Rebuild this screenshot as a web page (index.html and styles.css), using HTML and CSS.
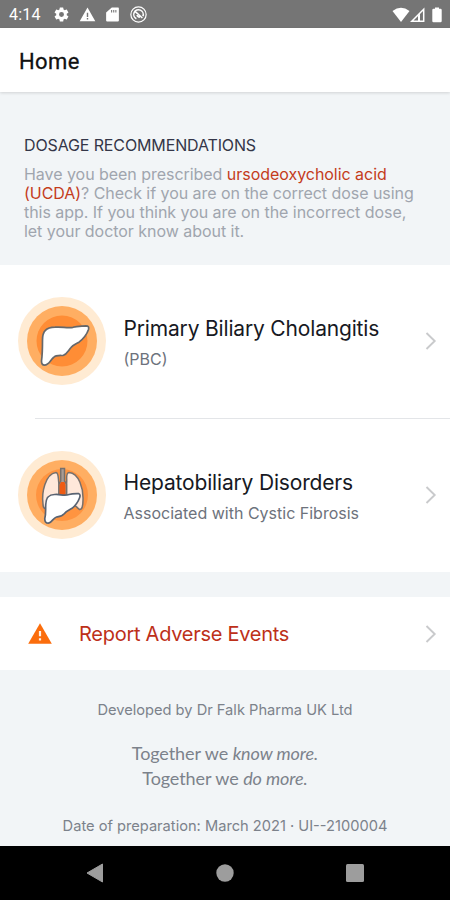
FILE: index.html
```html
<!DOCTYPE html>
<html lang="en">
<head>
  <meta charset="UTF-8" />
  <meta name="viewport" content="width=device-width, initial-scale=1.0"/>
  <title>Home</title>
  <link rel="stylesheet" href="styles.css">
</head>
<body>
  <div class="status-bar">
    <span class="time">4:14</span>
    <svg class="status-icon" viewBox="0 0 24 24"><path fill="#fff" fill-rule="evenodd" d="M19.4 13a7.5 7.5 0 0 0 0-2l2.1-1.6a.5.5 0 0 0 .1-.7l-2-3.4a.5.5 0 0 0-.6-.2l-2.5 1a7 7 0 0 0-1.7-1L14.5 2.4A.5.5 0 0 0 14 2h-4a.5.5 0 0 0-.5.4L9.2 5.1a7 7 0 0 0-1.7 1l-2.5-1a.5.5 0 0 0-.6.2l-2 3.4a.5.5 0 0 0 .1.7L4.6 11a7.5 7.5 0 0 0 0 2l-2.1 1.6a.5.5 0 0 0-.1.7l2 3.4c.1.2.4.3.6.2l2.5-1a7 7 0 0 0 1.7 1l.3 2.7c0 .2.3.4.5.4h4c.2 0 .5-.2.5-.4l.3-2.700a7 7 0 0 0 1.700-1l2.500 1c.2.1.5 0 .6-.2l2-3.400a.5.5 0 0 0-.1-.7zM12 15.500a3.500 3.500 0 1 1 0-7 3.500 3.500 0 0 1 0 7z"/></svg>
    <svg class="status-icon" viewBox="0 0 24 24"><path fill="#fff" fill-rule="evenodd" d="M1 21.500h22L12 2zM11 9.500h2v6h-2zM11 17h2v2h-2z"/></svg>
    <svg class="status-icon" viewBox="0 0 24 24"><path fill="#fff" fill-rule="evenodd" d="M20 2h-9L3 9v11.500q0 1.500 1.500 1.500h15q1.500 0 1.500-1.500V3.500Q21 2 20 2zM10 5.500h1.500V9H10zM13 5.500h1.500V9H13zM16 5.500h1.500V9H16z"/></svg>
    <svg class="status-icon" viewBox="0 0 24 24" fill="none" stroke="#fff">
      <circle cx="12" cy="12" r="10.800" stroke-width="1.700"/>
      <path d="M9 18A6.700 6.700 0 1 1 18.200 14.500M7.500 8L17.500 17M10 12.500q.5 3 4 3.300" stroke-width="2.200"/>
    </svg>
    <div class="status-right">
      <svg width="18" height="16" viewBox="0 0 18 16"><path fill="#fff" d="M.5 4Q9-2.500 17.500 4L9 15z"/></svg>
      <svg width="15" height="16" viewBox="0 0 15 16"><path fill="none" stroke="#fff" stroke-width="1.500" d="M1.800 14.200H13.700V2.300z"/><path fill="#fff" d="M8 8.500l2-2V14H8z"/></svg>
      <svg class="battery" width="10" height="16" viewBox="0 0 10 16"><path fill="#fff" d="M3 .5h4v1.300h1.500q1.200 0 1.200 1.200v11q0 1.200-1.200 1.200h-7Q.3 15.200.3 14V3q0-1.200 1.200-1.200H3z"/></svg>
    </div>
  </div>

  <header class="header">
    <h1 class="title">Home</h1>
  </header>

  <main class="content">
    <section class="intro">
      <h2 class="intro-title">DOSAGE RECOMMENDATIONS</h2>
      <p class="intro-text">Have you been prescribed <span class="red">ursodeoxycholic acid<br>(UCDA)</span>? Check if you are on the correct dose using<br>this app. If you think you are on the incorrect dose,<br>let your doctor know about it.</p>
    </section>

    <div class="list">
      <div class="item">
        <svg class="item-icon" viewBox="0 0 88 88">
          <circle cx="44" cy="44" r="44" fill="#ffebd3"/>
          <circle cx="44" cy="44" r="35" fill="#ffae62"/>
          <circle cx="44" cy="44" r="25.500" fill="#ff8d35"/>
          <path d="M24.500 43C24.500 34 28 30.500 37 30.200C44 29.500 49 31.300 55 30.300C59 29 63 29.300 68 28.900Q71.500 29 70.500 32.500C69 37 65 42 61 45.200C58 47 55 48 53 50.500C50 54 49 57.500 45 58.500C41 58.500 38 58 35.500 60.500C32 63.500 31 68 26.500 68.200Q23.500 68 23.500 64C24.500 57 24.500 50 24.500 43z" fill="#fff" stroke="#66686b" stroke-width="1.700"/>
        </svg>
        <div class="item-text">
          <div class="item-title">Primary Biliary Cholangitis</div>
          <div class="item-sub">(PBC)</div>
        </div>
        <svg class="chevron" viewBox="0 0 12 18"><path d="M1.500 1L9.700 9L1.500 17"/></svg>
      </div>
      <div class="divider"></div>
      <div class="item">
        <svg class="item-icon" viewBox="0 0 88 88">
          <circle cx="44" cy="44" r="44" fill="#ffebd3"/>
          <circle cx="44" cy="44" r="35" fill="#ffae62"/>
          <circle cx="44" cy="44" r="26" fill="#ff9440"/>
          <g stroke="#77706c" stroke-width="1.500">
            <path d="M38 21.500C41 22 40 28 41 33V44L31 56Q25 60 25 53C23.500 42 27 23 38 21.500z" fill="#ffe8da"/>
            <path d="M51 21.500C61 22 65.500 38 65 49Q65 59 61.500 58.500C59 57 58 54 54 53L48.500 44V33C49.500 28 47 22 51 21.500z" fill="#ffe8da"/>
            <path d="M42.700 17.500h3.800V30l2 3v11h-7.500V33l1.700-3z" fill="#a99c94"/>
          </g>
          <path d="M43 31h3.500l1 3v10h-6V34z" fill="#ee5b13"/>
          <path d="M27.700 54C28 46 31 43.300 37 43.500C42 43 46 45.200 51 43.500C54 42.500 57 42.600 60.500 42.500Q63 43.500 61.500 47C60 51 57 55 54 57.300C51 59 48 60 46.500 62.500C44 65.500 42 65.500 38.500 66C35 67 34 71.500 30.500 72.200Q26.500 72 26.800 67.500C28 63 27.500 59 27.700 54z" fill="#fff" stroke="#596372" stroke-width="1.700"/>
        </svg>
        <div class="item-text">
          <div class="item-title">Hepatobiliary Disorders</div>
          <div class="item-sub">Associated with Cystic Fibrosis</div>
        </div>
        <svg class="chevron" viewBox="0 0 12 18"><path d="M1.500 1L9.700 9L1.500 17"/></svg>
      </div>
    </div>

    <div class="report">
      <svg class="warning" viewBox="0 0 24 21"><path fill="#fb6d0c" d="M12 .3L23.800 20.700H.2z"/><path fill="#fff1e4" d="M10.900 8h2.200v5.300h-2.200zM10.900 15.300h2.200v2.200h-2.200z"/></svg>
      <span class="report-title">Report Adverse Events</span>
      <svg class="chevron" viewBox="0 0 12 18"><path d="M1.500 1L9.700 9L1.500 17"/></svg>
    </div>

    <footer class="footer">
      <p class="developer">Developed by Dr Falk Pharma UK Ltd</p>
      <p class="slogan">Together we <em>know more.</em><br>Together we <em>do more.</em></p>
      <p class="date">Date of preparation: March 2021 · UI--2100004</p>
    </footer>
  </main>

  <nav class="nav-bar">
    <svg width="18" height="20" viewBox="0 0 18 20"><path fill="#9d9d9d" stroke="#9d9d9d" stroke-linejoin="round" d="M1 10L16.500 1v18z"/></svg>
    <svg width="18" height="18" viewBox="0 0 18 18"><circle cx="9" cy="9" r="8.700" fill="#9d9d9d"/></svg>
    <svg width="18" height="18" viewBox="0 0 18 18"><rect width="18" height="18" rx="1.500" fill="#9d9d9d"/></svg>
  </nav>
</body>
</html>
```

FILE: styles.css
```css
* {
  box-sizing: border-box;
}

body {
  display: flex;
  flex-direction: column;
  width: 450px;
  height: 900px;
  margin: 0;
  overflow: hidden;
  font-family: Inter, "Liberation Sans", sans-serif;
  background: #f2f5f7;
}

h1, h2, p {
  margin: 0;
  font-weight: 400;
}

svg {
  display: block;
  flex: none;
}

.status-bar {
  display: flex;
  align-items: center;
  height: 28px;
  padding: 1px 8px 0 9px;
  background: #757575;
  color: #fff;
}

.time {
  width: 44px;
  font: 400 16px Roboto, sans-serif;
  letter-spacing: 0.2px;
}

.status-icon {
  width: 17px;
  height: 17px;
  margin-right: 8.5px;
}

.status-right {
  display: flex;
  align-items: center;
  margin-left: auto;
}

.battery {
  margin-left: 7px;
}

.header {
  display: flex;
  align-items: center;
  height: 64px;
  padding: 2px 19px 0;
  background: #fff;
  box-shadow: 0 1px 3px rgba(0, 0, 0, 0.14);
}

.title {
  font: 400 22px Roboto, sans-serif;
  letter-spacing: 0.4px;
  -webkit-text-stroke: 0.3px #111;
  color: #111;
}

.content {
  flex: 1;
}

.intro {
  height: 173px;
  padding: 43px 24px 0;
  white-space: nowrap;
}

.intro-title {
  font-size: 16px;
  line-height: 20px;
  letter-spacing: -0.13px;
  color: #343648;
}

.intro-text {
  margin-top: 9.5px;
  font-size: 16px;
  line-height: 19.3px;
  letter-spacing: -0.04px;
  color: #a0a5ae;
}

.red {
  color: #c43c1c;
}

.list {
  background: #fff;
}

.item {
  display: flex;
  align-items: center;
  height: 153px;
  padding: 0 13px 1px 18px;
}

.item-icon {
  width: 88px;
  height: 88px;
}

.item-text {
  flex: 1;
  margin-left: 17.5px;
  padding-top: 3px;
  white-space: nowrap;
}

.item-title {
  font-size: 21px;
  line-height: 26px;
  letter-spacing: -0.17px;
  color: #171923;
}

.item-sub {
  margin-top: 7px;
  font-size: 16px;
  line-height: 20px;
  color: #6d727c;
}

.chevron {
  width: 12px;
  height: 18px;
  fill: none;
  stroke: #c9cacc;
  stroke-width: 1.9;
}

.divider {
  height: 1px;
  margin-left: 35px;
  background: #e3e5e8;
}

.report {
  display: flex;
  align-items: center;
  height: 73px;
  margin-top: 25px;
  padding: 0 13px 0 28px;
  background: #fff;
}

.warning {
  width: 24px;
  height: 21px;
}

.report-title {
  flex: 1;
  margin-left: 27px;
  font-size: 20px;
  letter-spacing: -0.27px;
  color: #bd3019;
}

.footer {
  padding-top: 30px;
  text-align: center;
  white-space: nowrap;
  color: #7c828b;
}

.developer,
.date {
  font-size: 14.65px;
  line-height: 20px;
}

.slogan {
  margin-top: 21px;
  font-family: Lato, sans-serif;
  font-size: 18px;
  line-height: 25px;
  letter-spacing: -0.08px;
}

.date {
  margin-top: 25px;
}

.nav-bar {
  display: flex;
  align-items: center;
  justify-content: space-between;
  height: 54px;
  padding: 0 86px;
  background: #000;
}
```
